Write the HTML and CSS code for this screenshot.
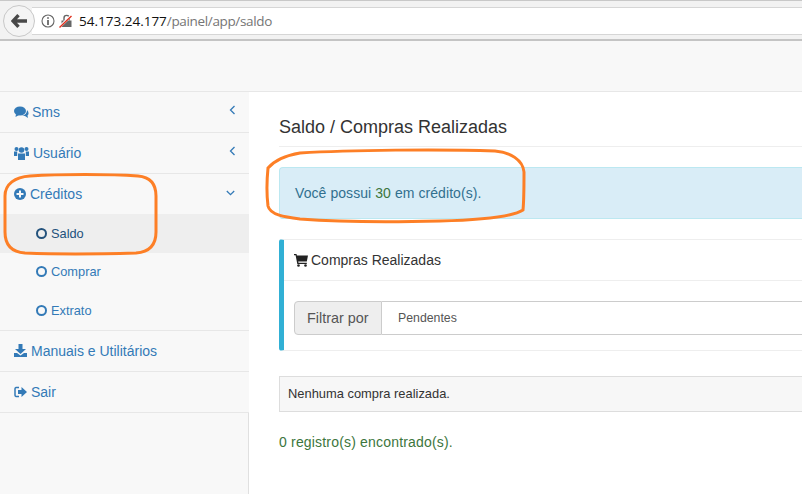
FILE: index.html
```html
<!DOCTYPE html>
<html lang="pt">
<head>
<meta charset="utf-8">
<title>Saldo</title>
<link rel="stylesheet" href="styles.css">
</head>
<body>
<header class="browser">
  <div class="back">
    <svg width="16" height="14" viewBox="0 0 16 14"><path d="M7.500 1.200 2 7l5.500 5.800M3 7h13" fill="none" stroke="#484848" stroke-width="3.400"/></svg>
  </div>
  <div class="address">
    <svg class="info" width="14" height="14" viewBox="0 0 14 14"><circle cx="7" cy="7" r="6" fill="none" stroke="#666" stroke-width="1.100"/><path d="M6.200 3.200h1.600v1.600H6.200zM6.200 6h1.600v5H6.200z" fill="#555"/></svg>
    <svg class="lock" width="13" height="14" viewBox="0 0 13 14"><path d="M5 6.500V4a2.600 2.600 0 0 1 5.200 0v2.500" fill="none" stroke="#666" stroke-width="1.400"/><path d="M2.500 6.500h10V13h-10z" fill="#666"/><path d="M0 13.500 12.500 1.500" stroke="#fff" stroke-width="2.600"/><path d="M.5 13.500 12.500 2" stroke="#e0301e" stroke-width="1.400"/></svg>
    <span class="host">54.173.24.177</span><span class="path">/painel/app/saldo</span>
  </div>
</header>
<nav class="topnav"></nav>
<div class="layout">
  <aside class="sidebar">
    <ul class="menu">
      <li class="item">
        <a class="link">
          <svg class="ico" width="15" height="13" viewBox="0 0 15 13"><ellipse cx="6" cy="5" rx="6" ry="4.500" fill="#337ab7"/><path d="M2 8 1.500 11 5 9zM13 4c2 2 2 4.500 .5 5.500l.5 2.500-3-2-3-.2C11 9.500 13 7 13 4z" fill="#337ab7"/></svg>
          <span class="label-sms">Sms</span>
          <svg class="chev" width="7" height="10" viewBox="0 0 7 10"><path d="M5.500 1 1.500 5l4 4" fill="none" stroke="#337ab7" stroke-width="1.300"/></svg>
        </a>
      </li>
      <li class="item">
        <a class="link">
          <svg class="ico" width="15" height="14" viewBox="0 0 15 14"><circle cx="7.500" cy="4" r="2.800" fill="#337ab7"/><circle cx="2.500" cy="3" r="2" fill="#337ab7"/><circle cx="12.500" cy="3" r="2" fill="#337ab7"/><path d="M4 7.500h7V14H4zM0 5.500h3.200v4.500H0zM11.800 5.500H15v4.500h-3.200z" fill="#337ab7"/></svg>
          <span>Usuário</span>
          <svg class="chev" width="7" height="10" viewBox="0 0 7 10"><path d="M5.500 1 1.500 5l4 4" fill="none" stroke="#337ab7" stroke-width="1.300"/></svg>
        </a>
      </li>
      <li class="item">
        <a class="link">
          <svg class="ico" width="12" height="12" viewBox="0 0 12 12"><circle cx="6" cy="6" r="6" fill="#337ab7"/><path d="M5 2.500h2V5h2.500v2H7v2.500H5V7H2.500V5H5z" fill="#f8f8f8"/></svg>
          <span>Créditos</span>
          <svg class="chev down" width="9" height="6" viewBox="0 0 9 6"><path d="M.8 1l3.700 3.700L8.200 1" fill="none" stroke="#337ab7" stroke-width="1.300"/></svg>
        </a>
        <ul class="sub">
          <li class="sublink active"><i class="ring"></i><span>Saldo</span></li>
          <li class="sublink"><i class="ring"></i><span>Comprar</span></li>
          <li class="sublink"><i class="ring"></i><span>Extrato</span></li>
        </ul>
      </li>
      <li class="item">
        <a class="link">
          <svg class="ico" width="13" height="13" viewBox="0 0 13 13"><path d="M4.500 0h4v5H12L6.500 10 1 5h3.500zM0 9h3l3.500 2.500L10 9h3v4H0z" fill="#337ab7"/></svg>
          <span>Manuais e Utilitários</span>
        </a>
      </li>
      <li class="item">
        <a class="link">
          <svg class="ico" width="13" height="12" viewBox="0 0 13 12"><path d="M5 1.500H2A1.200 1.200 0 0 0 1 2.700v6.600a1.200 1.200 0 0 0 1 1.200h3" fill="none" stroke="#337ab7" stroke-width="1.500"/><path d="M7.500 1 13 6l-5.500 5V8H4V4h3.500z" fill="#337ab7"/></svg>
          <span>Sair</span>
        </a>
      </li>
    </ul>
  </aside>
  <main class="content">
    <h1 class="title">Saldo / Compras Realizadas</h1>
    <div class="alert">Você possui <b class="num">30</b> em crédito(s).</div>
    <section class="callout">
      <h2 class="callout-head">
        <svg width="14" height="13" viewBox="0 0 14 13"><path d="M0 0h2.500l.4 1.500H14l-1.200 6H4.200l.3 1.300h8.300V10H3.300L1.600 1.200H0z" fill="#222"/><circle cx="4.500" cy="11.500" r="1.300" fill="#222"/><circle cx="11.500" cy="11.500" r="1.300" fill="#222"/></svg>
        <span>Compras Realizadas</span>
      </h2>
      <div class="filter">
        <span class="addon">Filtrar por</span>
        <span class="select">Pendentes</span>
      </div>
    </section>
    <div class="empty">Nenhuma compra realizada.</div>
    <p class="count">0 registro(s) encontrado(s).</p>
  </main>
</div>
<svg class="marks" width="802" height="494" viewBox="0 0 802 494">
  <path d="M30 176C60 174 110 174 138 176 150 177 156 184 156 196V232C156 245 150 252 136 253 100 254 50 254 25 253 10 252 5 244 5 232V196C5 184 15 177 30 176Z" fill="none" stroke="#fd7f26" stroke-width="3"/>
  <path d="M300 153C350 150 440 149 495 151 510 152 523 160 524 172 524 185 524 200 523 210 512 217 480 220 440 221 400 222 340 222 300 219 285 217 270 215 268 206 266 190 267 178 268 168 275 160 288 155 300 153Z" fill="none" stroke="#fd7f26" stroke-width="3"/>
</svg>
</body>
</html>
```
FILE: styles.css
```css
* { box-sizing: border-box; }
html, body { margin: 0; padding: 0; }
body {
  position: relative;
  width: 802px;
  height: 494px;
  overflow: hidden;
  background: #fff;
  font-family: "Liberation Sans", Arial, sans-serif;
  font-size: 14px;
  color: #333;
}
.browser {
  display: flex;
  align-items: center;
  height: 41px;
  padding: 1px 0 0 3px;
  background: #f2f2f2;
  border-top: 1px solid #c8c8c8;
  border-bottom: 2px solid #c4c4c4;
}
.back {
  display: flex;
  align-items: center;
  justify-content: center;
  flex: none;
  width: 32px;
  height: 32px;
  border: 1px solid #c8c8c8;
  border-radius: 50%;
  background: #f4f4f4;
  z-index: 1;
}
.address {
  display: flex;
  align-items: center;
  flex: 1;
  height: 28px;
  margin-left: -3px;
  padding-left: 9px;
  background: #fff;
  border-top: 1px solid #d6d6d6;
  border-bottom: 1px solid #d6d6d6;
  font-family: "Open Sans", sans-serif;
  font-size: 13.500px;
}
.info { margin-right: 4px; }
.lock { margin-right: 7px; }
.host { color: #111; }
.path { color: #757575; letter-spacing: -0.350px; }
.topnav {
  height: 51px;
  background: #f8f8f8;
  border-bottom: 1px solid #e7e7e7;
}
.layout { display: flex; height: 402px; }
.sidebar {
  flex: none;
  width: 249px;
  background: #f8f8f8;
  border-right: 1px solid #e0e0e0;
}
.menu, .sub { margin: 0; padding: 0; list-style: none; }
.menu { position: relative; margin-right: -1px; background: #f8f8f8; }
.item { border-bottom: 1px solid #e7e7e7; }
.link {
  position: relative;
  display: flex;
  align-items: center;
  gap: 4px;
  height: 40px;
  padding-left: 14px;
  color: #337ab7;
}
.label-sms { margin-left: -1px; }
.chev { position: absolute; right: 13px; top: 13px; }
.chev.down { right: 14px; top: 16px; }
.sublink {
  display: flex;
  align-items: center;
  gap: 4px;
  height: 38.670px;
  padding-left: 36px;
  font-size: 12.800px;
  color: #337ab7;
}
.sublink.active { background: #eee; color: #23527c; }
.ring {
  flex: none;
  width: 11px;
  height: 11px;
  border: 2px solid currentColor;
  border-radius: 50%;
}
.content { flex: 1; min-width: 0; padding-left: 30px; }
.title {
  margin: 0;
  height: 55px;
  padding: 24px 0 0;
  border-bottom: 1px solid #eee;
  font-size: 18px;
  font-weight: 400;
  line-height: 22px;
  color: #333;
}
.alert {
  height: 52px;
  margin-top: 20px;
  padding: 16px 15px;
  background: #d9edf7;
  border: 1px solid #bce8f1;
  border-right: 0;
  border-radius: 4px 0 0 4px;
  font-size: 14px;
  letter-spacing: 0.070px;
  line-height: 18px;
  color: #31708f;
}
.num { font-weight: 400; color: #3c763d; }
.callout {
  height: 112px;
  margin-top: 20px;
  border: 1px solid #eee;
  border-left: 5px solid #31b0d5;
  border-right: 0;
  border-radius: 3px 0 0 3px;
}
.callout-head {
  display: flex;
  align-items: center;
  gap: 3px;
  height: 41px;
  margin: 0;
  padding-left: 10px;
  border-bottom: 1px solid #eee;
  font-size: 14px;
  font-weight: 400;
  color: #333;
}
.filter { display: flex; height: 34px; margin: 20px 0 0 10px; }
.addon {
  flex: none;
  width: 88px;
  padding-left: 12px;
  background: #eee;
  border: 1px solid #ccc;
  border-radius: 4px 0 0 4px;
  font-size: 14.400px;
  line-height: 32px;
  color: #555;
}
.select {
  flex: 1;
  padding-left: 16px;
  border: 1px solid #ccc;
  border-left: 0;
  border-right: 0;
  font-size: 12.300px;
  line-height: 32px;
  color: #555;
}
.empty {
  height: 36px;
  margin-top: 25px;
  padding-left: 8px;
  background: #f7f7f7;
  border: 1px solid #ddd;
  border-right: 0;
  font-size: 12.900px;
  line-height: 34px;
  color: #333;
}
.count { margin: 21px 0 0; font-size: 14px; letter-spacing: 0.180px; line-height: 18px; color: #3c763d; }
.marks { position: absolute; left: 0; top: 0; pointer-events: none; }
```
